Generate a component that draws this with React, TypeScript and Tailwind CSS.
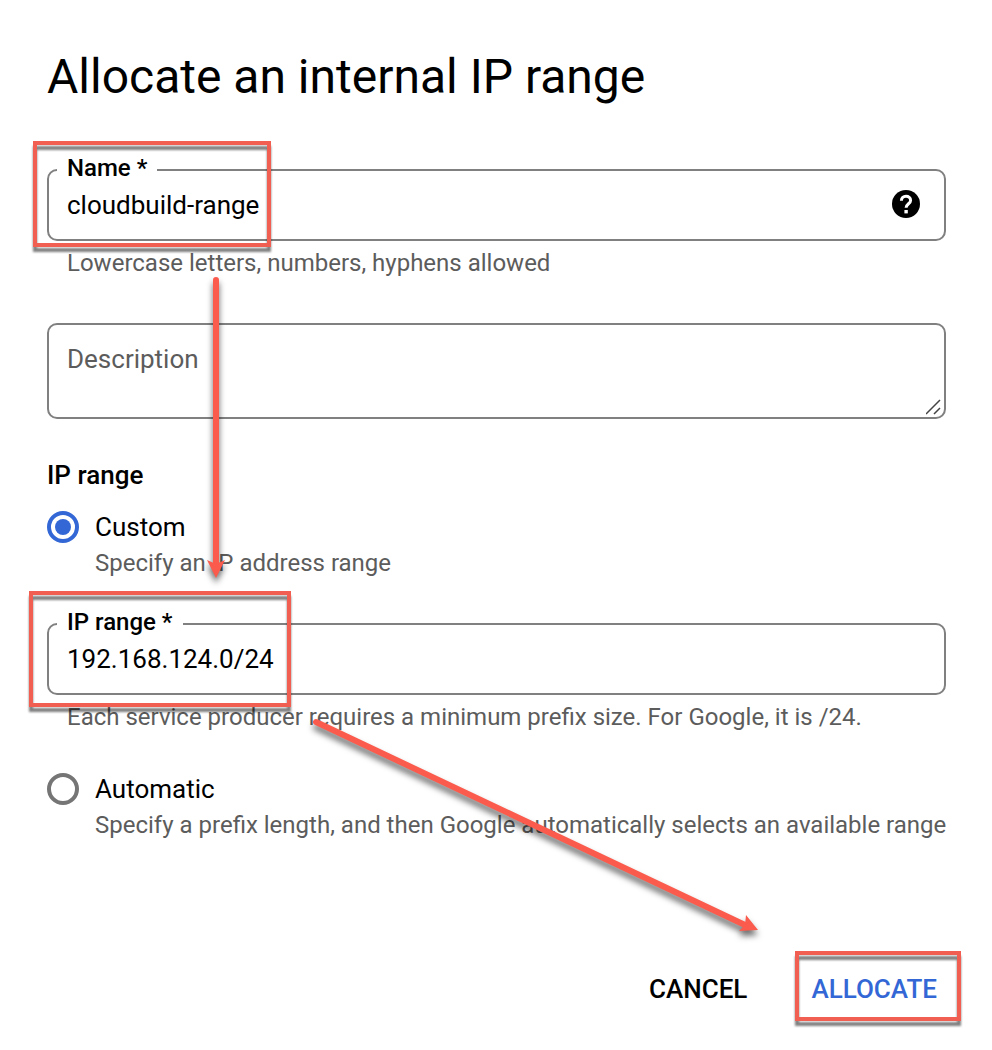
import { useState } from 'react';

interface OutlinedFieldProps {
  id: string;
  label: string;
  value: string;
  onChange: (value: string) => void;
  hint: string;
  help?: boolean;
  highlight: string;
}

function Highlight({ className }: { className: string }) {
  return (
    <span
      aria-hidden="true"
      className={`pointer-events-none absolute z-10 border-4 border-[#f05f51] drop-shadow-[0_5px_1px_rgba(0,0,0,0.5)] ${className}`}
    />
  );
}

function HelpIcon() {
  return (
    <svg className="h-7 w-7" viewBox="0 0 28 28" aria-hidden="true">
      <circle cx="14" cy="14" r="14" fill="black" />
      <path
        d="M9.4 10.8c0-2.9 2-4.6 4.6-4.6s4.6 1.6 4.6 4.2c0 3.2-4.5 3.6-4.5 7.4"
        fill="none"
        stroke="white"
        strokeWidth="3"
      />
      <rect x="12.4" y="20" width="3.4" height="3.4" fill="white" />
    </svg>
  );
}

function OutlinedField({ id, label, value, onChange, hint, help, highlight }: OutlinedFieldProps) {
  return (
    <div className="relative">
      <fieldset className="min-w-0 rounded-[10px] border-2 border-[#808080] px-2 pb-[15px]">
        <legend className="px-[10px] pb-1 text-2xl leading-6 font-medium">
          <label htmlFor={id}>{label}</label>
        </legend>
        <div className="flex items-center pr-4">
          <input
            id={id}
            type="text"
            value={value}
            onChange={(e) => onChange(e.target.value)}
            className="h-10 min-w-0 flex-1 bg-transparent px-[10px] pt-[2px] text-[26px] outline-none"
          />
          {help && (
            <button type="button" aria-label="Help" className="shrink-0">
              <HelpIcon />
            </button>
          )}
        </div>
      </fieldset>
      <p className="mt-2 pl-5 text-2xl leading-7 text-[#5c5c5c]">{hint}</p>
      <Highlight className={highlight} />
    </div>
  );
}

interface RangeOptionProps {
  value: string;
  title: string;
  text: string;
  checked: boolean;
  onSelect: (value: string) => void;
}

function RangeOption({ value, title, text, checked, onSelect }: RangeOptionProps) {
  return (
    <label className="-mr-4 flex items-start gap-4">
      <input
        type="radio"
        name="range-type"
        value={value}
        checked={checked}
        onChange={() => onSelect(value)}
        className="h-8 w-8 shrink-0 appearance-none rounded-full border-4 border-[#757575] p-1 before:block before:h-full before:w-full before:rounded-full checked:border-[#3367d6] checked:before:bg-[#3367d6]"
      />
      <span className="flex min-w-0 flex-col gap-1">
        <span className="text-[26px] leading-8">{title}</span>
        <span className="text-2xl leading-8 text-[#5c5c5c]">{text}</span>
      </span>
    </label>
  );
}

function Arrows() {
  return (
    <svg
      className="pointer-events-none absolute top-0 left-0 z-20 h-full w-full overflow-visible drop-shadow-[0_5px_3px_rgba(0,0,0,0.6)]"
      fill="#fb5b4c"
      stroke="#fb5b4c"
      aria-hidden="true"
    >
      <line x1="216" y1="280" x2="216" y2="566" strokeWidth="6" strokeLinecap="round" />
      <path d="M216 578L207 560L216 564L225 560Z" stroke="none" />
      <line x1="316" y1="722" x2="745" y2="925" strokeWidth="6" strokeLinecap="round" />
      <path d="M758 930L739 931L745 925L746 915Z" stroke="none" />
    </svg>
  );
}

export default function App() {
  const [name, setName] = useState('cloudbuild-range');
  const [description, setDescription] = useState('');
  const [rangeType, setRangeType] = useState('custom');
  const [range, setRange] = useState('192.168.124.0/24');

  return (
    <main className="relative min-h-screen bg-white pt-12 pr-[46px] pb-6 pl-[47px] font-['Roboto',sans-serif] text-black">
      <h1 className="text-5xl leading-[58px]">Allocate an internal IP range</h1>

      <form onSubmit={(e) => e.preventDefault()}>
        <div className="mt-[50px]">
          <OutlinedField
            id="name"
            label="Name *"
            value={name}
            onChange={setName}
            hint="Lowercase letters, numbers, hyphens allowed"
            help
            highlight="-top-[15px] -left-[14px] h-[106px] w-[238px]"
          />
        </div>

        {/* Description */}
        <div className="relative mt-[46px]">
          <textarea
            aria-label="Description"
            placeholder="Description"
            value={description}
            onChange={(e) => setDescription(e.target.value)}
            className="block h-24 w-full resize-none rounded-[10px] border-2 border-[#808080] px-[18px] py-[18px] text-[26px] leading-8 outline-none placeholder:text-[#5c5c5c]"
          />
          <svg
            className="pointer-events-none absolute right-1 bottom-1 h-4 w-4"
            viewBox="0 0 16 16"
            fill="none"
            stroke="#444"
            strokeWidth="1.5"
            aria-hidden="true"
          >
            <path d="M0 15L14 1M8 15l6-6" />
          </svg>
        </div>

        <h2 className="mt-10 text-[26px] leading-8 font-medium">IP range</h2>

        <div className="mt-5">
          <RangeOption
            value="custom"
            title="Custom"
            text="Specify an IP address range"
            checked={rangeType === 'custom'}
            onSelect={setRangeType}
          />
        </div>

        <div className="mt-[31px]">
          <OutlinedField
            id="ip-range"
            label="IP range *"
            value={range}
            onChange={setRange}
            hint="Each service producer requires a minimum prefix size. For Google, it is /24."
            highlight="-top-[19px] -left-[18px] h-[116px] w-[262px]"
          />
        </div>

        <div className="mt-[42px]">
          <RangeOption
            value="automatic"
            title="Automatic"
            text="Specify a prefix length, and then Google automatically selects an available range"
            checked={rangeType === 'automatic'}
            onSelect={setRangeType}
          />
        </div>

        {/* Actions */}
        <div className="mt-28 -mr-[15px] flex justify-end gap-8 text-[26px] leading-8 font-medium">
          <button type="button" className="px-4 py-5">
            CANCEL
          </button>
          <button type="submit" className="relative py-5 pr-6 pl-4 text-[#3367d6]">
            ALLOCATE
            <Highlight className="-top-[2px] left-0 h-[70px] w-full" />
          </button>
        </div>
      </form>

      <Arrows />
    </main>
  );
}
